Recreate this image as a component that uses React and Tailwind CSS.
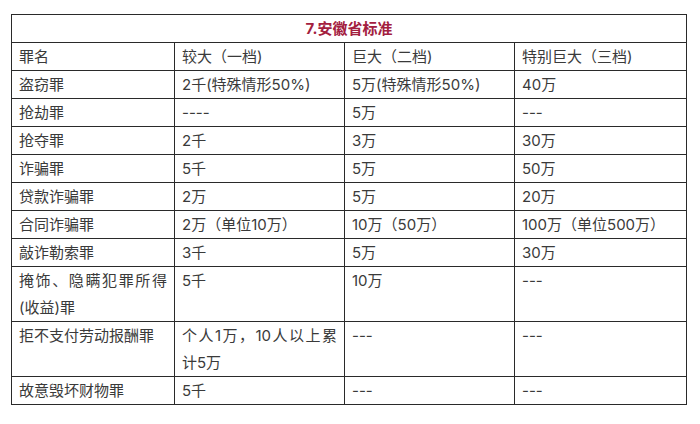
import React from "react";

const rows = [
  ["罪名", "较大（一档)", "巨大（二档)", "特别巨大（三档)"],
  ["盗窃罪", "2千(特殊情形50%)", "5万(特殊情形50%)", "40万"],
  ["抢劫罪", "----", "5万", "---"],
  ["抢夺罪", "2千", "3万", "30万"],
  ["诈骗罪", "5千", "5万", "50万"],
  ["贷款诈骗罪", "2万", "5万", "20万"],
  ["合同诈骗罪", "2万（单位10万）", "10万（50万）", "100万（单位500万）"],
  ["敲诈勒索罪", "3千", "5万", "30万"],
  ["掩饰、隐瞒犯罪所得(收益)罪", "5千", "10万", "---"],
  ["拒不支付劳动报酬罪", "个人1万，10人以上累计5万", "---", "---"],
  ["故意毁坏财物罪", "5千", "---", "---"],
];

export default function App() {
  return (
    <div
      className="w-[700px] h-[424px] bg-white pt-[14px] pl-[11px]"
      style={{ fontFamily: 'Inter, "Noto Sans CJK SC", sans-serif' }}
    >
      <table className="border-collapse table-fixed w-[675px] text-[15px] leading-[27px] text-[#3a3a3a]">
        <colgroup>
          <col className="w-[163px]" />
          <col className="w-[170px]" />
          <col className="w-[170px]" />
          <col className="w-[172px]" />
        </colgroup>
        <tbody>
          <tr>
            <td
              colSpan={4}
              className="border border-[#2a2a2a] text-center font-bold text-[#a3203f] p-0"
            >
              7.安徽省标准
            </td>
          </tr>
          {rows.map((r, i) => (
            <tr key={i}>
              {r.map((c, j) => (
                <td
                  key={j}
                  className="border border-[#2a2a2a] align-top px-[7px] py-0 text-justify"
                >
                  {c}
                </td>
              ))}
            </tr>
          ))}
        </tbody>
      </table>
    </div>
  );
}
